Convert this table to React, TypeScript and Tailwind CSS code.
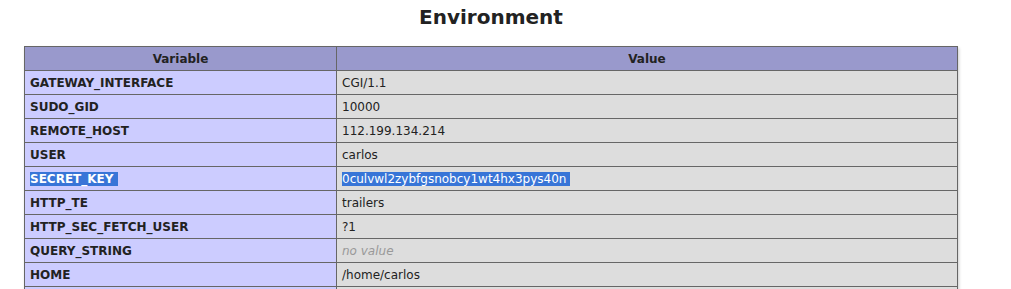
import React from 'react';

type Row = { name: string; value: string; selected?: boolean; empty?: boolean };

const rows: Row[] = [
    { name: 'GATEWAY_INTERFACE', value: 'CGI/1.1' },
    { name: 'SUDO_GID', value: '10000' },
    { name: 'REMOTE_HOST', value: '112.199.134.214' },
    { name: 'USER', value: 'carlos' },
    { name: 'SECRET_KEY', value: '0culvwl2zybfgsnobcy1wt4hx3pys40n', selected: true },
    { name: 'HTTP_TE', value: 'trailers' },
    { name: 'HTTP_SEC_FETCH_USER', value: '?1' },
    { name: 'QUERY_STRING', value: '', empty: true },
    { name: 'HOME', value: '/home/carlos' },
];

const cell = 'border border-[#666] pl-[5px] pr-[5px] pt-[5px] pb-[4px] leading-[14px] text-[12px] align-baseline';

export default function App() {
    return (
        <div className="min-h-screen bg-white text-[#222] font-['DejaVu_Sans',sans-serif] pl-[24px]">
            <h2 className="w-[934px] pt-[6px] mb-[17px] text-center text-[20px] leading-[23px] font-bold">Environment</h2>

            <table className="w-[934px] table-fixed border-collapse shadow-[1px_2px_3px_#ccc]">
                <colgroup>
                    <col className="w-[312px]" />
                    <col />
                </colgroup>
                <thead>
                    <tr className="bg-[#99c] font-bold">
                        <th className={cell}>Variable</th>
                        <th className={cell}>Value</th>
                    </tr>
                </thead>
                <tbody>
                    {rows.map((r) => (
                        <tr key={r.name}>
                            <td className={`${cell} bg-[#ccf] font-bold text-left`}>
                                {r.selected ? <span className="bg-[#3875d7] text-white">{r.name}&nbsp;</span> : r.name}
                            </td>
                            <td className={`${cell} bg-[#ddd] text-left`}>
                                {r.empty ? (
                                    <i className="text-[#999]">no value</i>
                                ) : r.selected ? (
                                    <span className="bg-[#3875d7] text-white">{r.value}&nbsp;</span>
                                ) : (
                                    r.value
                                )}
                            </td>
                        </tr>
                    ))}
                    {/* next row, runs off the bottom of the view */}
                    <tr className="h-[24px]">
                        <td className={`${cell} bg-[#ccf]`} />
                        <td className={`${cell} bg-[#ddd]`} />
                    </tr>
                </tbody>
            </table>
        </div>
    );
}
